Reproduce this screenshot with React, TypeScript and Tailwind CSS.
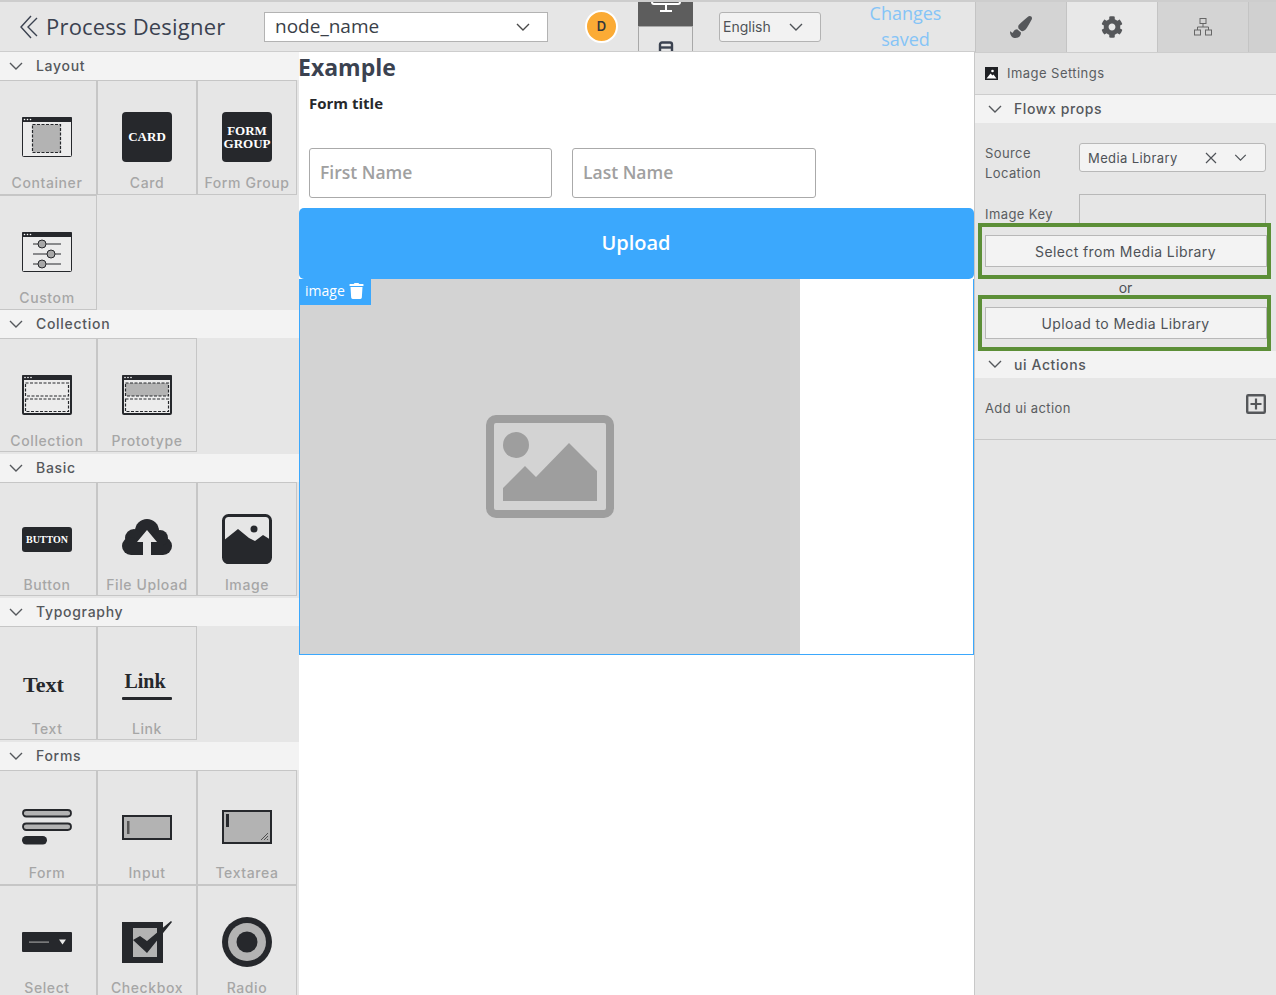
import React from "react";
import { FaPaintBrush, FaCog, FaTrash } from "react-icons/fa";

const DARK = "#26282c";
const GRAY = "#b3b3b3";

function Chevron({ className }: { className: string }) {
  return (
    <svg viewBox="0 0 14 8" className={className} fill="none" stroke="currentColor" strokeWidth="1.4">
      <path d="M1 1l6 6 6-6" />
    </svg>
  );
}

function WindowFrame({ children }: { children: React.ReactNode }) {
  return (
    <svg width="50" height="50" viewBox="0 0 50 50">
      <rect x="0.5" y="5.5" width="49" height="39" fill="#ececec" stroke={DARK} rx="1" />
      <rect x="0" y="5" width="50" height="5" fill={DARK} rx="1" />
      <circle cx="2.5" cy="7.5" r="0.8" fill="#fff" />
      <circle cx="5.5" cy="7.5" r="0.8" fill="#fff" />
      <circle cx="8.5" cy="7.5" r="0.8" fill="#fff" />
      {children}
    </svg>
  );
}

const IconContainer = () => (
  <WindowFrame>
    <rect x="10.5" y="12.5" width="28" height="28" fill={GRAY} stroke={DARK} strokeWidth="1.2" strokeDasharray="3 1.5" />
  </WindowFrame>
);

const IconCustom = () => (
  <WindowFrame>
    <g stroke={DARK} strokeWidth="1" fill="#a8a8a8">
      <path d="M11 17h28M11 27h28M11 37h28" />
      <circle cx="20" cy="17" r="4" />
      <circle cx="29" cy="27" r="4" />
      <circle cx="20" cy="37" r="4" />
    </g>
  </WindowFrame>
);

const IconCollection = ({ filled }: { filled?: boolean }) => (
  <svg width="50" height="50" viewBox="0 0 50 50">
    <rect x="1" y="6" width="48" height="38" fill="#ececec" stroke={DARK} strokeWidth="2" rx="1" />
    <rect x="0" y="5" width="50" height="5" fill={DARK} rx="1" />
    <circle cx="3" cy="7.5" r="0.8" fill="#fff" />
    <circle cx="6" cy="7.5" r="0.8" fill="#fff" />
    <circle cx="9" cy="7.5" r="0.8" fill="#fff" />
    <rect x="3.5" y="13" width="43" height="13" fill={filled ? GRAY : "#ececec"} stroke={DARK} strokeWidth="1.2" strokeDasharray="3 1.5" />
    <rect x="3.5" y="29" width="43" height="12.5" fill="#ececec" stroke={DARK} strokeWidth="1.2" strokeDasharray="3 1.5" />
  </svg>
);

const IconUpload = () => (
  <svg width="50" height="50" viewBox="0 0 50 50">
    <g fill={DARK}>
      <circle cx="25" cy="17" r="12" />
      <circle cx="12" cy="24" r="9" />
      <circle cx="9" cy="32" r="9" />
      <circle cx="41" cy="32" r="9" />
      <circle cx="38" cy="24" r="8" />
      <rect x="9" y="26" width="32" height="15" />
    </g>
    <path d="M25 16L35 28H29V41H21V28H15z" fill="#e6e6e6" />
  </svg>
);

const IconImage = () => (
  <svg width="50" height="50" viewBox="0 0 50 50">
    <rect x="1.5" y="1.5" width="47" height="47" rx="5" fill="none" stroke={DARK} strokeWidth="3" />
    <circle cx="32" cy="15" r="3.5" fill={DARK} />
    <path d="M1 27L16 15l11 9 6 3 8-6 8 5v19a5 5 0 0 1-5 5H6a5 5 0 0 1-5-5z" fill={DARK} />
  </svg>
);

const IconForm = () => (
  <svg width="50" height="50" viewBox="0 0 50 50">
    <rect x="1" y="8" width="48" height="6.5" rx="3.2" fill={GRAY} stroke={DARK} strokeWidth="1.8" />
    <rect x="1" y="21.5" width="48" height="6.5" rx="3.2" fill={GRAY} stroke={DARK} strokeWidth="1.8" />
    <rect x="0" y="34" width="25" height="8.5" rx="4.2" fill={DARK} />
  </svg>
);

const IconInput = () => (
  <svg width="50" height="50" viewBox="0 0 50 50">
    <rect x="1" y="14" width="48" height="23" fill={GRAY} stroke={DARK} strokeWidth="2" />
    <rect x="5" y="19" width="2.5" height="13" fill="#555" />
  </svg>
);

const IconTextarea = () => (
  <svg width="50" height="50" viewBox="0 0 50 50">
    <rect x="1" y="9" width="48" height="32" fill={GRAY} stroke={DARK} strokeWidth="2" />
    <rect x="4" y="12" width="3" height="13" fill={DARK} />
    <path d="M39 38l7-7M42 38l4-4M45 38l1-1" stroke="#444" strokeWidth="0.9" />
  </svg>
);

const IconSelect = () => (
  <svg width="50" height="50" viewBox="0 0 50 50">
    <rect x="0" y="15" width="50" height="20" rx="1" fill={DARK} />
    <rect x="7" y="24.5" width="20" height="1.2" fill="#9a9a9a" />
    <path d="M37 22.5h7l-3.5 5z" fill="#e8e8e8" />
  </svg>
);

const IconCheckbox = () => (
  <svg width="50" height="50" viewBox="0 0 50 50">
    <rect x="0" y="5" width="41" height="41" fill={DARK} />
    <rect x="11" y="11" width="24" height="29" fill={GRAY} />
    <path d="M11 23L18 19 25 24 49 4 50 5 25 36z" fill={DARK} />
  </svg>
);

const IconRadio = () => (
  <svg width="50" height="50" viewBox="0 0 50 50">
    <circle cx="25" cy="25" r="25" fill={DARK} />
    <circle cx="25" cy="25" r="19" fill={GRAY} />
    <circle cx="25" cy="25" r="10.5" fill={DARK} />
  </svg>
);

const serif = "font-['Liberation_Serif',serif] font-bold";

const IconCard = () => (
  <div className={`flex h-[50px] w-[50px] items-center justify-center rounded-[4px] bg-[#26282c] text-[13px] text-white ${serif}`}>CARD</div>
);
const IconFormGroup = () => (
  <div className={`flex h-[50px] w-[50px] flex-col items-center justify-center rounded-[4px] bg-[#26282c] text-center text-[13px] leading-[13px] text-white ${serif}`}>
    <span>FORM</span>
    <span>GROUP</span>
  </div>
);
const IconButton = () => (
  <div className="flex h-[50px] w-[50px] items-center">
    <div className={`flex h-[25px] w-[50px] items-center justify-center rounded-[3px] bg-[#26282c] text-[10px] text-white ${serif}`}>BUTTON</div>
  </div>
);
const IconText = () => (
  <div className={`flex h-[50px] w-[50px] items-center text-[22px] text-[#26282c] ${serif}`}>
    <span className="ml-[1px] mt-[2px]">Text</span>
  </div>
);
const IconLink = () => (
  <div className={`flex h-[50px] w-[50px] flex-col items-center text-[20px] leading-[24px] text-[#26282c] ${serif}`}>
    <span className="mt-[11px] ml-[-4px]">Link</span>
    <span className="mt-[4px] h-[3px] w-[50px] rounded-[1px] bg-[#26282c]" />
  </div>
);

type Item = { label: string; icon: React.ReactNode };

function Cell({ item, first, tall }: { item: Item; first: boolean; tall: boolean }) {
  return (
    <div
      className={`flex w-[100px] shrink-0 flex-col items-center border border-[#c6c6c6] pt-[31px] ${first ? "ml-[-3px]" : ""} ${tall ? "h-[115px]" : "h-[114px]"}`}
    >
      <div className="h-[50px] w-[50px]">{item.icon}</div>
      <div className="mt-[11px] whitespace-nowrap text-[14px] font-medium leading-[20px] tracking-[0.6px] text-[#a6a6a6]">{item.label}</div>
    </div>
  );
}

function SideHeader({ title, className }: { title: string; className: string }) {
  return (
    <div className={`flex items-center bg-[#f3f3f3] pb-[1px] pl-[9px] text-[14px] font-medium tracking-[0.7px] text-[#55585c] ${className}`}>
      <Chevron className="h-[8px] w-[14px]" />
      <span className="ml-[13px]">{title}</span>
    </div>
  );
}

function Rows({ items, tall }: { items: Item[]; tall?: boolean }) {
  const rows: Item[][] = [];
  for (let i = 0; i < items.length; i += 3) rows.push(items.slice(i, i + 3));
  return (
    <>
      {rows.map((r, i) => (
        <div key={i} className="flex">
          {r.map((it, j) => (
            <Cell key={it.label} item={it} first={j === 0} tall={!!tall} />
          ))}
        </div>
      ))}
    </>
  );
}

function Sidebar() {
  return (
    <div className="h-full w-[299px] shrink-0 overflow-hidden bg-[#e6e6e6]">
      <SideHeader title="Layout" className="h-[28px]" />
      <Rows
        tall
        items={[
          { label: "Container", icon: <IconContainer /> },
          { label: "Card", icon: <IconCard /> },
          { label: "Form Group", icon: <IconFormGroup /> },
          { label: "Custom", icon: <IconCustom /> },
        ]}
      />
      <SideHeader title="Collection" className="h-[28px]" />
      <Rows
        items={[
          { label: "Collection", icon: <IconCollection /> },
          { label: "Prototype", icon: <IconCollection filled /> },
        ]}
      />
      <SideHeader title="Basic" className="mt-[2px] h-[28px]" />
      <Rows
        items={[
          { label: "Button", icon: <IconButton /> },
          { label: "File Upload", icon: <IconUpload /> },
          { label: "Image", icon: <IconImage /> },
        ]}
      />
      <SideHeader title="Typography" className="mt-[2px] h-[28px]" />
      <Rows
        items={[
          { label: "Text", icon: <IconText /> },
          { label: "Link", icon: <IconLink /> },
        ]}
      />
      <SideHeader title="Forms" className="mt-[2px] h-[28px]" />
      <Rows
        tall
        items={[
          { label: "Form", icon: <IconForm /> },
          { label: "Input", icon: <IconInput /> },
          { label: "Textarea", icon: <IconTextarea /> },
          { label: "Select", icon: <IconSelect /> },
          { label: "Checkbox", icon: <IconCheckbox /> },
          { label: "Radio", icon: <IconRadio /> },
        ]}
      />
    </div>
  );
}

function TopBar() {
  return (
    <div className="flex h-[52px] shrink-0 items-center border-y border-t-2 border-y-[#cdcdcd] bg-[#e6e6e6] font-['Open_Sans',sans-serif]">
      <svg width="18" height="24" viewBox="0 0 18 24" className="ml-[20px] shrink-0 text-[#3b4250]" fill="none" stroke="currentColor" strokeWidth="1.4">
        <path d="M11 1L1 12l10 11M17 3L8 12l9 9" />
      </svg>
      <div className="ml-[8px] mt-[-2px] w-[218px] shrink-0 whitespace-nowrap text-[22px] leading-[32px] tracking-[0.2px] text-[#3b4250]">Process Designer</div>
      <div className="flex h-[30px] w-[284px] shrink-0 items-center justify-between border border-[#b3b3b3] bg-white pl-[10px] pr-[17px] text-[19px] text-[#3a3f48]">
        <span>node_name</span>
        <Chevron className="h-[8px] w-[14px] text-[#4a4a4a]" />
      </div>
      <div className="ml-[37px] flex h-[33px] w-[33px] shrink-0 items-center justify-center rounded-full border-[2px] border-white bg-[#fbab35] font-['Inter',sans-serif] text-[13px] font-semibold text-[#33363b]">D</div>
      <div className="ml-[20px] flex h-full w-[55px] shrink-0 flex-col overflow-hidden">
        <div className="flex h-[24px] shrink-0 items-end justify-center overflow-hidden bg-[#5d5d5d] pb-[12px]">
          <svg width="30" height="24" viewBox="0 0 30 24" className="shrink-0" fill="none" stroke="#fff" strokeWidth="2">
            <rect x="1" y="-8" width="28" height="22" rx="2" />
            <path d="M15 14v6M9 21h12" />
          </svg>
        </div>
        <div className="flex flex-1 justify-center overflow-hidden border border-b-0 border-[#a8a8a8] pt-[14px]">
          <svg width="16" height="24" viewBox="0 0 16 24" className="shrink-0" fill="none" stroke="#3b4250" strokeWidth="2.4">
            <rect x="2" y="1.5" width="12" height="22" rx="2" />
            <path d="M2 6.5h12" />
          </svg>
        </div>
      </div>
      <div className="ml-[26px] flex h-[30px] w-[102px] shrink-0 items-center justify-between rounded-[3px] border border-[#b3b3b3] bg-[#f2f2f2] pl-[3px] pr-[17px] font-['Inter',sans-serif] text-[14px] text-[#4e5257]">
        <span>English</span>
        <Chevron className="h-[8px] w-[14px]" />
      </div>
      <div className="ml-[15px] mt-[-2px] w-[139px] shrink-0 text-center text-[18px] leading-[26px] text-[#85c4f7]">
        Changes
        <br />
        saved
      </div>
    </div>
  );
}

function Canvas() {
  return (
    <div className="h-full w-[676px] shrink-0 border-r border-[#c8c8c8] bg-white font-['Open_Sans',sans-serif]">
      <div className="ml-[-1px] h-[30px] text-[23px] font-bold leading-[30px] text-[#3b4250]">Example</div>
      <div className="mt-[11px] pl-[10px] text-[15px] font-bold leading-[20px] text-[#26282c]">Form title</div>
      <div className="mt-[35px] flex gap-[20px] pl-[10px]">
        <div className="flex h-[50px] w-[243px] items-center rounded-[3px] border border-[#aaaaaa] pb-[2px] pl-[10px] text-[17.5px] font-semibold text-[#a0a0a0]">First Name</div>
        <div className="flex h-[50px] w-[244px] items-center rounded-[3px] border border-[#aaaaaa] pb-[2px] pl-[10px] text-[17.5px] font-semibold text-[#a0a0a0]">Last Name</div>
      </div>
      <div className="mt-[10px] flex h-[71px] items-center justify-center rounded-[5px] bg-[#3ba8fd] pb-[2px] pr-[1px] text-[20px] font-semibold text-white">Upload</div>
      <div className="relative h-[376px] border-x border-b border-[#3ba8fd]">
        <div className="flex h-[375px] w-[500px] items-center justify-center bg-[#d3d3d3]">
          <svg width="128" height="103" viewBox="0 0 128 103">
            <rect x="4" y="4" width="120" height="95" rx="6" fill="none" stroke="#9e9e9e" strokeWidth="8" />
            <circle cx="30" cy="30" r="13" fill="#9e9e9e" />
            <path d="M17 73l22-22 11 11 33-34 28 28v30H17z" fill="#9e9e9e" />
          </svg>
        </div>
        <div className="absolute left-0 top-0 flex h-[26px] w-[71px] items-center bg-[#3ba8fd] pb-[3px] pl-[5px] text-[14px] text-white">
          <span>image</span>
          <FaTrash className="ml-[4px] h-[16px] w-[15px]" />
        </div>
      </div>
    </div>
  );
}

function PanelHeader({ title, className }: { title: string; className: string }) {
  return (
    <div className={`flex items-center bg-[#f3f3f3] pb-[1px] pl-[13px] text-[14px] font-medium tracking-[0.6px] text-[#55585c] ${className}`}>
      <Chevron className="h-[8px] w-[14px]" />
      <span className="ml-[12px]">{title}</span>
    </div>
  );
}

function GreenBox({ label, className }: { label: string; className: string }) {
  return (
    <div className={`ml-[3px] flex w-[293px] items-center border-[4px] border-[#5c8f37] pl-[3px] ${className}`}>
      <div className="flex h-[32px] w-full items-center justify-center border border-[#b8b8b8] bg-[#f3f3f3] pr-[1px] text-[14px] tracking-[0.4px] text-[#4e5257]">{label}</div>
    </div>
  );
}

function RightPanel() {
  return (
    <div className="h-full w-[301px] shrink-0 bg-[#e6e6e6] font-['Inter',sans-serif] text-[#5a5d61]">
      <div className="flex h-[53px] border-y border-t-2 border-y-[#cdcdcd] bg-[#d0d0d0]">
        <div className="flex w-[92px] items-center justify-center border-x border-[#c4c4c4] bg-[#d4d4d4] text-[#55575a]">
          <FaPaintBrush className="h-[22px] w-[22px]" />
        </div>
        <div className="flex w-[90px] items-center justify-center bg-[#e8e8e8] text-[#55575a]">
          <FaCog className="h-[22px] w-[22px]" />
        </div>
        <div className="flex w-[92px] items-center justify-center border-x border-[#c4c4c4] bg-[#d4d4d4]">
          <svg width="20" height="20" viewBox="0 0 20 20" fill="none" stroke="#666" strokeWidth="1">
            <rect x="7" y="1.5" width="6" height="5" />
            <rect x="1.5" y="13" width="6" height="5" />
            <rect x="12.5" y="13" width="6" height="5" />
            <path d="M10 6.5V10M4.5 13v-3h11v3" />
          </svg>
        </div>
      </div>
      <div className="flex h-[42px] items-center border-b border-[#cdcdcd] pl-[10px] text-[13px] tracking-[0.45px]">
        <svg width="13" height="13" viewBox="0 0 13 13">
          <rect width="13" height="13" fill="#1f2124" />
          <circle cx="7.5" cy="4" r="1.3" fill="#fff" />
          <path d="M1.5 11.5l4-5 2 2 1-1 3 4z" fill="#fff" />
        </svg>
        <span className="ml-[9px]">Image Settings</span>
      </div>
      <PanelHeader title="Flowx props" className="h-[28px]" />
      <div className="flex pl-[10px] pr-[10px] pt-[20px] text-[13px] tracking-[0.4px]">
        <div className="w-[94px] leading-[20px]">
          Source
          <br />
          Location
        </div>
        <div className="flex h-[29px] flex-1 items-center justify-between rounded-[3px] border border-[#b8b8b8] bg-[#f3f3f3] pl-[8px] pr-[18px] text-[#4e5257]">
          <span className="pt-[3px]">Media Library</span>
          <span className="flex items-center gap-[17px]">
            <svg width="12" height="12" viewBox="0 0 12 12" fill="none" stroke="currentColor" strokeWidth="1.2"><path d="M1 1l10 10M11 1L1 11" /></svg>
            <Chevron className="h-[7px] w-[13px]" />
          </span>
        </div>
      </div>
      <div className="mt-[11px] flex h-[29px] pl-[10px] pr-[10px] text-[13px] tracking-[0.4px]">
        <div className="w-[94px] pt-[10px] leading-[20px]">Image Key</div>
        <div className="h-[29px] flex-1 border border-b-0 border-[#b8b8b8]" />
      </div>
      <GreenBox label="Select from Media Library" className="h-[56px]" />
      <div className="h-[16px] text-center text-[14px] leading-[18px] text-[#4e5257]">or</div>
      <GreenBox label="Upload to Media Library" className="h-[56px]" />
      <PanelHeader title="ui Actions" className="h-[27px]" />
      <div className="flex h-[62px] items-start justify-between border-b border-[#c8c8c8] pl-[10px] pr-[10px] pt-[16px] text-[13px] tracking-[0.4px]">
        <span className="mt-[5px]">Add ui action</span>
        <svg width="20" height="20" viewBox="0 0 20 20" fill="none" stroke="#55575a">
          <rect x="1.2" y="1.2" width="17.6" height="17.6" rx="1" strokeWidth="2.4" />
          <path d="M10 4.5v11M4.5 10h11" strokeWidth="2.2" />
        </svg>
      </div>
    </div>
  );
}

export default function App() {
  return (
    <div className="flex h-[995px] w-[1276px] overflow-hidden bg-white font-['Inter',sans-serif]">
      <div className="flex w-[975px] shrink-0 flex-col">
        <TopBar />
        <div className="flex min-h-0 flex-1">
          <Sidebar />
          <Canvas />
        </div>
      </div>
      <RightPanel />
    </div>
  );
}
